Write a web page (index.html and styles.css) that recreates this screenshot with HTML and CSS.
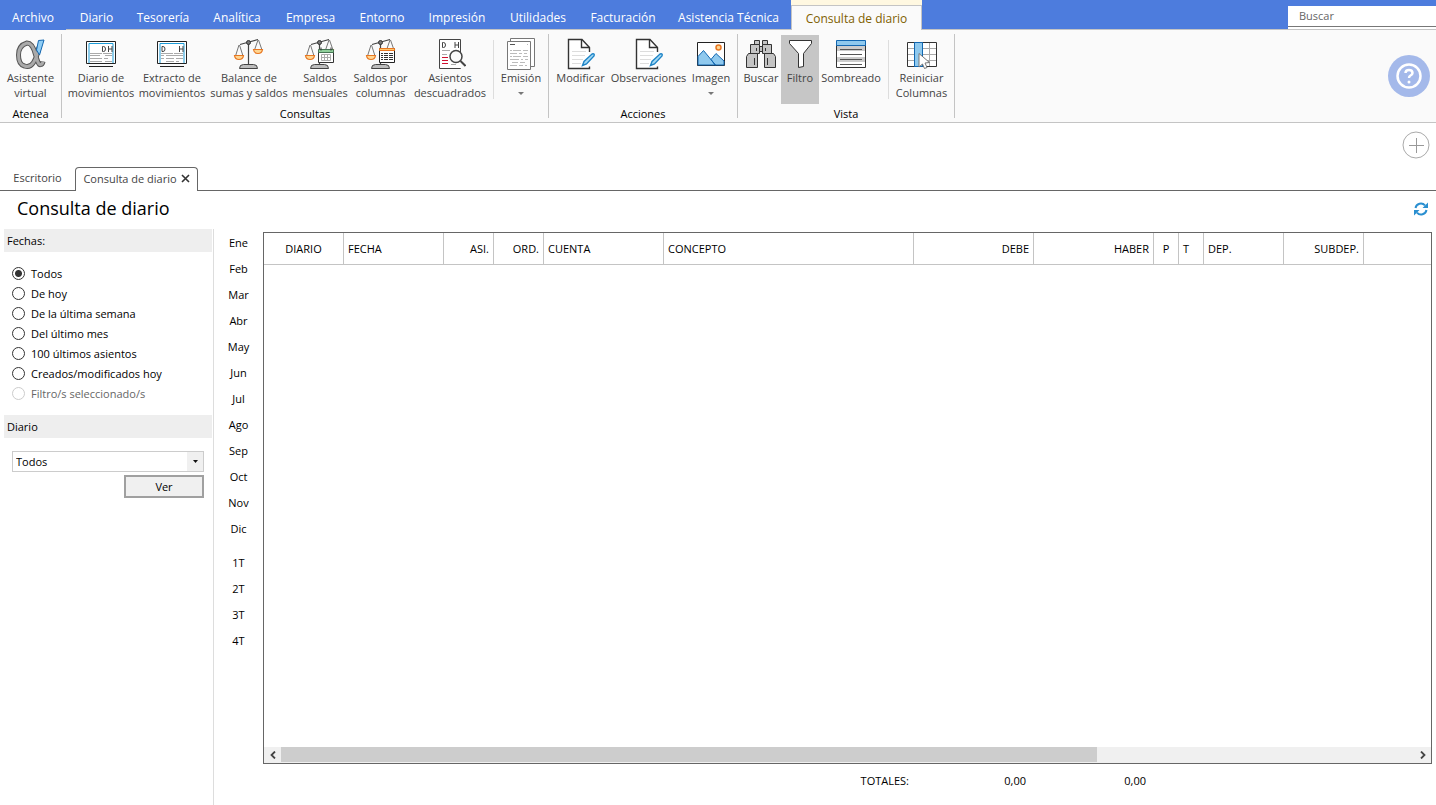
FILE: index.html
```html
<!DOCTYPE html>
<html lang="es">
<head>
<meta charset="utf-8">
<title>Consulta de diario</title>
<link rel="stylesheet" href="styles.css">
</head>
<body>
<svg class="defs" aria-hidden="true">
  <defs>
    <g id="scales">
      <path d="M7 6.500 16 4 25 1.500M15.500 6v21" fill="none" stroke="#444" stroke-width="1.200"/>
      <path d="M6 7 2.500 18M6.500 7 10 18M25 2 21.500 12M25.500 2 29 12" fill="none" stroke="#777"/>
      <circle cx="15.500" cy="4.500" r="2" fill="#777" stroke="#333"/>
      <path d="M1.500 17.500h9q-.5 4-4.500 4t-4.500-4ZM20.500 11.500h9q-.5 4-4.500 4t-4.500-4Z" fill="#ffd692" stroke="#e87722" stroke-width="1.200"/>
      <path d="M6.500 30.500q0-4 4-4h10q4 0 4 4Z" fill="#bdbdbd" stroke="#444"/>
    </g>
    <g id="sheet-edit">
      <path d="M22.500 13V9.500L15 1.500H1.500v29h20v-2" fill="#fff"/>
      <path d="M22.500 14V9.500L15 1.500H1.500v29h21v-2" fill="none" stroke="#333" stroke-width="1.400"/>
      <path d="M14.500 1.500v8h8" fill="none" stroke="#333" stroke-width="1.400"/>
      <path d="M5 13.500h14M5 17.500h13M5 21.500h11M5 25.500h9" stroke="#ddd"/>
      <path d="m15.500 27.500 1.500-4 8-7.500q3-1 2 2l-7.500 8Z" fill="#a5daf5" stroke="#1e84c6" stroke-width="1.400"/>
    </g>
  </defs>
</svg>

<header class="topbar">
  <nav class="menu">
    <button>Archivo</button><button>Diario</button><button>Tesorería</button><button>Analítica</button><button>Empresa</button><button>Entorno</button><button>Impresión</button><button>Utilidades</button><button>Facturación</button><button>Asistencia Técnica</button><button class="menu-active">Consulta de diario</button>
  </nav>
  <div class="search"><input type="text" placeholder="Buscar" aria-label="Buscar"></div>
</header>

<div class="ribbon">
  <section class="group">
    <div class="tools tools-atenea">
      <button class="tool"><svg viewBox="0 0 32 32"><path d="M24 9q-2 10-5.500 15.500T9.500 28Q3.500 26.500 3.500 17T12 5q5.500 0 8.500 11.500t5 10q2 0 2.500-3" fill="none" stroke="#555" stroke-width="5"/><path d="M24 9q-2 10-5.500 15.500T9.500 28Q3.500 26.500 3.500 17T12 5q5.500 0 8.500 11.500t5 10q2 0 2.500-3" fill="none" stroke="#aaa" stroke-width="3"/><path d="m23.500 2.500 5.500-.500-4.500 15-3-5Z" fill="#8fcdf5" stroke="#1267b1"/></svg><span>Asistente<br>virtual</span></button>
    </div>
    <h2>Atenea</h2>
  </section>
  <section class="group">
    <div class="tools tools-consultas">
      <button class="tool"><svg viewBox="0 0 32 32"><path d="M1.500 3.500h29v22h-29Z" fill="#fff" stroke="#222"/><path d="M4 25V5.500h24V25" fill="none" stroke="#1b9bd7"/><path d="M17.500 8.500v5h1q2 0 2-2.500t-2-2.500ZM23.500 8v6M27 8v6M23.500 11H27" fill="none" stroke="#444"/><path d="M5 15.500h12M18 15.500h9M5 17.500h10M20 17.500h7M5 20.500h12M19 20.500h4M5 23.500h12M20 23.500h7" stroke="#aaa"/><path d="M4 28.500h24" stroke="#222"/></svg><span>Diario de<br>movimientos</span></button>
      <button class="tool"><svg viewBox="0 0 32 32"><path d="M1.500 3.500h29v22h-29Z" fill="#fff" stroke="#222"/><path d="M4 25V5.500h24V25" fill="none" stroke="#1b9bd7"/><path d="M6 8.500v5h1q2 0 2-2.500t-2-2.500ZM23.500 8v6M27 8v6M23.500 11H27" fill="none" stroke="#444"/><path d="M5 15.500h12M18 15.500h9M5 17.500h3M10 17.500h17M5 20.500h3M10 20.500h8M20 20.500h7M10 23.500h8M20 23.500h3" stroke="#aaa"/><path d="M4 28.500h24" stroke="#222"/></svg><span>Extracto de<br>movimientos</span></button>
      <button class="tool"><svg viewBox="0 0 32 32"><use href="#scales"/></svg><span>Balance de<br>sumas y saldos</span></button>
      <button class="tool"><svg viewBox="0 0 32 32"><use href="#scales"/><path d="M14.500 12.500h15v12h-15Z" fill="#fff" stroke="#333"/><path d="M14.500 11.500h15v3h-15Z" fill="#8fcf9a" stroke="#467353"/><path d="M17 9.500v3M27 9.500v3" stroke="#333"/><path d="M17.500 16.500h9v6h-9ZM20.500 16v7M23.500 16v7M17 19.500h10" fill="none" stroke="#aaa"/></svg><span>Saldos<br>mensuales</span></button>
      <button class="tool"><svg viewBox="0 0 32 32"><use href="#scales"/><path d="M14.500 10.500h15v14h-15Z" fill="#fff" stroke="#222"/><path d="M14.500 10.500h15v2h-15Z" fill="#ffc66d" stroke="#e87722"/><path d="M16 15.500h2M19 15.500h4M24 15.500h4M16 17.500h2M19 17.500h4M24 17.500h4M16 19.500h2M19 19.500h4M24 19.500h4M16 21.500h2M19 21.500h4M24 21.500h4" stroke="#333"/></svg><span>Saldos por<br>columnas</span></button>
      <button class="tool"><svg viewBox="0 0 32 32"><path d="M5.500 1.500h21v29h-21Z" fill="#fff" stroke="#444"/><path d="M8.500 4.500v5h1q2 0 2-2.500t-2-2.500ZM21 4v6M24.500 4v6M21 7h3.500" fill="none" stroke="#444"/><path d="M8 12.500h8M8 16.500h5" stroke="#aaa"/><path d="M8 19.500h6M8 22.500h6M8 25.500h6" stroke="#d01030"/><path d="M26.500 23v7" stroke="#fff" stroke-width="2"/><circle cx="22" cy="18.500" r="6" fill="#fafafa" stroke="#444" stroke-width="1.500"/><path d="m26.500 23 5 5" stroke="#444" stroke-width="2"/><path d="M17 26.500h5" stroke="#aaa"/></svg><span>Asientos<br>descuadrados</span></button>
      <i class="divider"></i>
      <button class="tool"><svg viewBox="0 0 32 32"><path d="M5.500.500h24v28h-24Z" fill="#fff" stroke="#777"/><path d="M2.500 3.500h23v28h-23Z" fill="#fff" stroke="#777"/><path d="M5 6.500h5" stroke="#555"/><path d="M22 6.500h1M5 12.500h2M8 12.500h8M18 12.500h5M5 15.500h7M14 15.500h3M19 15.500h3M5 18.500h2M8 18.500h8M18 18.500h5M5 21.500h9M16 21.500h2M20 21.500h3M7 24.500h6M15 24.500h5M5 27.500h7M14 27.500h4M20 27.500h2" stroke="#bbb"/></svg><span>Emisión</span><b class="caret"></b></button>
    </div>
    <h2>Consultas</h2>
  </section>
  <section class="group">
    <div class="tools tools-acciones">
      <button class="tool"><svg viewBox="0 0 32 32"><use href="#sheet-edit" x="2"/></svg><span>Modificar</span></button>
      <button class="tool"><svg viewBox="0 0 32 32"><use href="#sheet-edit" x="2"/></svg><span>Observaciones</span></button>
      <button class="tool"><svg viewBox="0 0 32 32"><path d="M2.500 4.500h27v23h-27Z" fill="#fff" stroke="#222"/><circle cx="23.500" cy="9.500" r="2.500" fill="#ffd692" stroke="#e87722" stroke-width="1.500"/><path d="m3 18.500 5.500-6 12 14.500H3ZM16 21.500l5-6 8 7.500v4h-9Z" fill="#8fc9ee" stroke="#1267b1"/></svg><span>Imagen</span><b class="caret"></b></button>
    </div>
    <h2>Acciones</h2>
  </section>
  <section class="group">
    <div class="tools tools-vista">
      <button class="tool"><svg viewBox="0 0 32 32"><g fill="#c4c4c4" stroke="#333"><path d="M9.500 2.500h5v4h-5ZM17.500 2.500h5v4h-5ZM14 8.500h4v5h-4Z"/><path d="M5.500 6.500h9v9h-9ZM17.500 6.500h9v9h-9Z"/><path d="M3.500 15.500h9v14h-11v-11ZM19.500 15.500h9l2 3v11h-11Z"/><path d="M11.500 10v3M20.500 10v3M9.500 20v7M22.500 20v7"/></g></svg><span>Buscar</span></button>
      <button class="tool tool-on"><svg viewBox="0 0 32 32"><path d="M5.500 2.500h22v3l-8 10v13l-5 1v-14l-9-10Z" fill="#fff" stroke="#333"/></svg><span>Filtro</span></button>
      <button class="tool"><svg viewBox="0 0 32 32"><path d="M1.500 7.500h29v21h-29Z" fill="#fff"/><path d="M2 8h28v5H2ZM2 19h28v5H2Z" fill="#ccc"/><path d="M5 11.500h22M5 16.500h22M5 21.500h22M5 26.500h22" stroke="#555"/><path d="M1.500 7v22.500h29V7" fill="none" stroke="#333"/><path d="M1.500 2.500h29v5h-29Z" fill="#8fc9ee" stroke="#1267b1"/></svg><span>Sombreado</span></button>
      <i class="divider"></i>
      <button class="tool"><svg viewBox="0 0 32 32"><path d="M1.500 4.500h29v24h-29Z" fill="#fff"/><path d="M16.500 4v25M23.500 4v25M2 10.500h28M2 16.500h28M2 22.500h28" stroke="#aaa"/><path d="M1.500 4.500h29v24h-29Z" fill="none" stroke="#333"/><path d="M8.500 4.500h8v24h-8Z" fill="#8fc9ee" stroke="#1267b1"/><path d="m13 15.500 10.500 9-4.500.500 2 4.500-2.500 1-2-4.500-3.500 3Z" fill="#fff" stroke="#777"/></svg><span>Reiniciar<br>Columnas</span></button>
    </div>
    <h2>Vista</h2>
  </section>
  <button class="help" aria-label="Ayuda"><svg viewBox="0 0 42 42"><circle cx="21" cy="21" r="21" fill="#a4b9ea"/><circle cx="21" cy="21" r="11.500" fill="none" stroke="#fff" stroke-width="2.500"/><path d="M17.500 18q0-3 3.500-3t3.500 3q0 1.500-2 2.500-1.500.8-1.500 2.500" fill="none" stroke="#fff" stroke-width="2.500"/><circle cx="21" cy="27" r="1.500" fill="#fff"/></svg></button>
</div>

<div class="actions"><button class="add" aria-label="Añadir"><svg viewBox="0 0 28 28"><circle cx="14" cy="14" r="13" fill="#fff" stroke="#aaa"/><path d="M14.500 7v15M7 14.500h15" stroke="#999"/></svg></button></div>

<nav class="pages">
  <button class="page-tab">Escritorio</button>
  <button class="page-tab page-current">Consulta de diario <svg viewBox="0 0 9 9"><path d="m1 1 7 7M8 1 1 8" stroke="#333" stroke-width="1.600"/></svg></button>
</nav>

<div class="heading">
  <h1>Consulta de diario</h1>
  <button class="refresh" aria-label="Actualizar"><svg viewBox="0 0 16 16"><path d="M2.500 7A5.500 5.500 0 0 1 12 4.300M13.500 9A5.500 5.500 0 0 1 4 11.700" fill="none" stroke="#2a8fd0" stroke-width="2"/><path d="M15 1.500v5.500H9.500ZM1 14.500V9h5.500Z" fill="#2a8fd0"/></svg></button>
</div>

<main class="workspace">
  <form class="filters">
    <h2>Fechas:</h2>
    <div class="radios">
      <label><input type="radio" name="fecha" checked>Todos</label>
      <label><input type="radio" name="fecha">De hoy</label>
      <label><input type="radio" name="fecha">De la última semana</label>
      <label><input type="radio" name="fecha">Del último mes</label>
      <label><input type="radio" name="fecha">100 últimos asientos</label>
      <label><input type="radio" name="fecha">Creados/modificados hoy</label>
      <label class="off"><input type="radio" name="fecha" disabled>Filtro/s seleccionado/s</label>
    </div>
    <h2><label for="diario">Diario</label></h2>
    <div class="journal">
      <div class="combo"><select id="diario"><option>Todos</option></select><span class="combo-arrow"><svg viewBox="0 0 5 3"><path d="M0 0h5L2.500 3Z" fill="#111"/></svg></span></div>
      <button type="button" class="view">Ver</button>
    </div>
  </form>

  <div class="periods">
    <button>Ene</button><button>Feb</button><button>Mar</button><button>Abr</button><button>May</button><button>Jun</button><button>Jul</button><button>Ago</button><button>Sep</button><button>Oct</button><button>Nov</button><button>Dic</button>
    <button class="quarter">1T</button><button>2T</button><button>3T</button><button>4T</button>
  </div>

  <div class="ledger">
    <div class="sheet">
      <table>
        <colgroup><col class="w80"><col class="w100"><col class="w50"><col class="w50"><col class="w120"><col class="w250"><col class="w120"><col class="w120"><col class="w25"><col class="w25"><col class="w80"><col class="w80"><col></colgroup>
        <thead><tr><th class="mid">DIARIO</th><th>FECHA</th><th class="num">ASI.</th><th class="num">ORD.</th><th>CUENTA</th><th>CONCEPTO</th><th class="num">DEBE</th><th class="num">HABER</th><th class="mid">P</th><th>T</th><th>DEP.</th><th class="num">SUBDEP.</th><th></th></tr></thead>
        <tbody></tbody>
      </table>
      <div class="scroll">
        <button aria-label="Izquierda"><svg viewBox="0 0 8 8"><path d="M6 .500 2.500 4 6 7.500" fill="none" stroke="#444" stroke-width="1.800"/></svg></button>
        <div class="track"><div class="thumb"></div></div>
        <button aria-label="Derecha"><svg viewBox="0 0 8 8"><path d="M2 .500 5.500 4 2 7.500" fill="none" stroke="#444" stroke-width="1.800"/></svg></button>
      </div>
    </div>
    <div class="totals"><span>TOTALES:</span><output>0,00</output><output>0,00</output></div>
  </div>
</main>
</body>
</html>
```
FILE: styles.css
```css
* { box-sizing: border-box; }
body {
  margin: 0;
  min-height: 100vh;
  display: flex;
  flex-direction: column;
  background: #fff;
  color: #000;
  font: 11px/15px "Open Sans", "Noto Sans", sans-serif;
}
button, input, select { font: inherit; color: inherit; }
button { background: none; border: 0; padding: 0; white-space: nowrap; }
h1, h2 { margin: 0; font-weight: 400; }
svg { display: block; }
.defs { position: absolute; width: 0; height: 0; }

.topbar {
  display: flex;
  justify-content: space-between;
  height: 30px;
  background: #4d7cdd;
  box-shadow: inset 0 -1px #c4c4c4;
}
.menu {
  display: grid;
  grid-template-columns: 66px 61px 72px 76px 71px 72px 78px 84px 86px 125px 131px;
  font-size: 12px;
  color: #fff;
}
.menu button { padding-top: 6px; border-bottom: 1px solid #c4c4c4; }
.menu button:first-child { border-color: #4d7cdd; }
.menu .menu-active {
  border: 1px solid #c4c4c4;
  border-bottom: 0;
  margin-top: 5px;
  padding-top: 0;
  background: #fafafa;
  box-shadow: 0 -5px #fff8e1;
  color: #806000;
}
.search { width: 148px; padding-top: 6px; }
.search input {
  display: block;
  width: 100%;
  height: 21px;
  padding: 0 11px 2px;
  border: 0;
  border-bottom: 1px solid #777;
  border-radius: 0;
  background: #fff;
  box-shadow: 0 2px #fff;
}
.search input::placeholder { color: #666; opacity: 1; }

.ribbon {
  display: flex;
  height: 93px;
  background: #fafafa;
  border-bottom: 1px solid #c4c4c4;
}
.group {
  padding: 5px 1px 0 0;
  background: linear-gradient(#c4c4c4, #c4c4c4) right center / 1px 84px no-repeat;
}
.group h2 { padding-top: 2px; text-align: center; font-size: 11px; }
.tools { display: grid; height: 69px; color: #444; }
.tools-atenea { grid-template-columns: 61px; }
.tools-consultas { grid-template-columns: 78px 64px 90px 52px 69px 70px 9px 54px; }
.tools-acciones { grid-template-columns: 63px 73px 52px; }
.tools-vista { grid-template-columns: 40px 38px 64px 6px 65px; padding-left: 3px; }
.tool {
  display: flex;
  flex-direction: column;
  align-items: center;
  padding-top: 3px;
}
.tool svg { width: 32px; height: 32px; flex: none; }
.tool-on { background: #c6c6c6; }
.caret {
  margin-top: 7px;
  border: 3px solid transparent;
  border-top-color: #777;
  border-bottom: 0;
}
.divider { border-right: 1px solid #ddd; margin: 5px 0; }
.help { margin: auto 6px auto auto; }
.help svg { width: 42px; height: 42px; }

.actions { display: flex; justify-content: flex-end; height: 44px; padding: 7px 6px; }
.add svg { width: 28px; height: 28px; }

.pages {
  display: flex;
  height: 24px;
  box-shadow: inset 0 -1px #666;
  color: #444;
}
.page-tab { width: 75px; padding-bottom: 3px; }
.page-current {
  display: flex;
  align-items: center;
  justify-content: center;
  gap: 4px;
  width: 123px;
  background: #fff;
  border: 1px solid #666;
  border-bottom: 0;
  border-radius: 4px 4px 0 0;
}
.page-current svg { width: 9px; height: 9px; }

.heading {
  display: flex;
  align-items: center;
  justify-content: space-between;
  height: 38px;
  padding: 0 7px 2px 17px;
}
h1 { padding-bottom: 2px; font-size: 18px; line-height: 24px; }
.refresh svg { width: 16px; height: 16px; }

.workspace { flex: 1; display: flex; }
.filters { width: 214px; padding: 0 1px 0 4px; border-right: 1px solid #ddd; }
.filters h2 { padding: 0 3px; background: #eee; font-size: 11px; line-height: 23px; }
.radios { padding: 11px 8px 12px; display: flex; flex-direction: column; }
.radios label { display: flex; align-items: center; gap: 6px; height: 20px; }
.radios input {
  appearance: none;
  width: 13px;
  height: 13px;
  margin: 0;
  border: 1px solid #333;
  border-radius: 50%;
}
.radios input:checked { background: radial-gradient(circle, #333 3px, #fff 4px); }
.radios .off { color: #666; }
.radios .off input { border-color: #ccc; }
.journal { padding: 13px 8px; display: flex; flex-direction: column; align-items: flex-end; gap: 3px; }
.combo { display: flex; width: 100%; height: 21px; border: 1px solid #ccc; }
.combo select { flex: 1; appearance: none; border: 0; padding: 0 3px; background: #fff; }
.combo-arrow { width: 16px; background: #f0f0f0; display: grid; place-items: center; }
.combo-arrow svg { width: 5px; height: 3px; }
.view { width: 80px; height: 23px; border: 2px solid #a0a0a0; background: #f0f0f0; }

.periods { width: 49px; display: flex; flex-direction: column; }
.periods button { height: 26px; }
.periods .quarter { margin-top: 8px; }

.ledger { flex: 1; padding: 3px 4px 17px 0; display: flex; flex-direction: column; }
.sheet { flex: 1; display: flex; flex-direction: column; justify-content: space-between; border: 1px solid #666; }
table { width: 100%; table-layout: fixed; border-collapse: separate; border-spacing: 0; }
th {
  height: 32px;
  padding: 0 4px;
  border-right: 1px solid #c4c4c4;
  border-bottom: 1px solid #c4c4c4;
  font-weight: 400;
  text-align: left;
}
th:last-child { border-right: 0; }
.mid { text-align: center; }
.num { text-align: right; }
.w25 { width: 25px; }
.w50 { width: 50px; }
.w80 { width: 80px; }
.w100 { width: 100px; }
.w120 { width: 120px; }
.w250 { width: 250px; }
.scroll { display: flex; height: 16px; background: #f0f0f0; }
.scroll button { width: 17px; display: grid; place-items: center; }
.scroll svg { width: 8px; height: 8px; }
.track { flex: 1; }
.thumb { width: 72%; height: 15px; background: #cdcdcd; }
.totals {
  display: grid;
  grid-template-columns: 646px 117px 120px;
  padding-top: 9px;
  line-height: 15px;
  text-align: right;
}
```
